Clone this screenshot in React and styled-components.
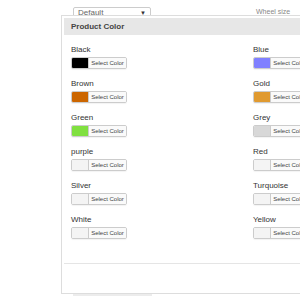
import styled, { createGlobalStyle } from 'styled-components';

const GlobalStyle = createGlobalStyle`
  html, body {
    margin: 0;
    padding: 0;
    background: #fff;
    font-family: "Liberation Sans", Arial, sans-serif;
  }
`;

const Page = styled.div`
  position: relative;
  width: 300px;
  height: 300px;
  overflow: hidden;
  background: #fff;
`;

const Backdrop = styled.div`
  display: flex;
  flex-direction: column;
  padding: 7px 0 0 73px;
`;

const TopRow = styled.div`
  display: flex;
  align-items: flex-start;
  gap: 105px;
`;

const FakeSelect = styled.div`
  width: 78px;
  height: 18px;
  box-sizing: border-box;
  border: 1px solid #ccc;
  border-radius: 2px;
  display: flex;
  justify-content: space-between;
  padding: 1px 4px 0 4px;
  font-size: 8px;
  line-height: 8px;
  color: #666;
`;

const Caret = styled.span`
  font-size: 6px;
  line-height: 9px;
  color: #333;
`;

const FieldLabel = styled.div`
  font-size: 7px;
  color: #888;
  padding-top: 1px;
`;

const BottomEdge = styled.div`
  margin-top: 269px;
  width: 79px;
  height: 4px;
  border-top: 2px solid #ececec;
`;

const Modal = styled.div`
  position: absolute;
  left: 61px;
  top: 15px;
  width: 260px;
  height: 279px;
  box-sizing: border-box;
  border: 1px solid #ddd;
  padding: 2px;
  background: #fff;
  display: flex;
  flex-direction: column;
`;

const Header = styled.div`
  height: 17px;
  background: #e7e7e7;
  padding-left: 7px;
  display: flex;
  align-items: center;
  font-size: 8px;
  font-weight: bold;
  color: #444;
`;

const Body = styled.div`
  height: 229px;
  box-sizing: border-box;
  padding: 10px 7px 0;
  display: grid;
  grid-template-columns: 182px 1fr;
  grid-auto-rows: 24px;
  row-gap: 10px;
`;

const Field = styled.div`
  display: flex;
  flex-direction: column;
`;

const Label = styled.div`
  font-size: 8px;
  line-height: 10px;
  color: #333;
  margin-bottom: 2px;
  white-space: nowrap;
`;

const ColorGroup = styled.div`
  display: flex;
  height: 12px;
  width: 56px;
  box-sizing: border-box;
  border: 1px solid #ccc;
  border-radius: 2px;
  box-shadow: 0 1px 1px rgba(0, 0, 0, 0.05);
  overflow: hidden;
`;

const Swatch = styled.div`
  width: 16px;
  flex: none;
  background: ${(p) => p.$color};
  border-right: 1px solid #ccc;
`;

const SelectButton = styled.div`
  flex: 1;
  background: #fafafa;
  font-size: 6px;
  line-height: 10px;
  color: #444;
  text-align: center;
  white-space: nowrap;
`;

const Footer = styled.div`
  height: 27px;
  border-top: 1px solid #e5e5e5;
`;

const colors = [
  ['Black', '#000000'],
  ['Blue', '#8080ff'],
  ['Brown', '#cc6600'],
  ['Gold', '#e09a30'],
  ['Green', '#80e040'],
  ['Grey', '#d8d8d8'],
  ['purple', '#f4f4f4'],
  ['Red', '#f4f4f4'],
  ['Silver', '#f4f4f4'],
  ['Turquoise', '#f4f4f4'],
  ['White', '#f4f4f4'],
  ['Yellow', '#f4f4f4'],
];

export default function App() {
  return (
    <Page>
      <GlobalStyle />
      <Backdrop>
        <TopRow>
          <FakeSelect>
            <span>Default</span>
            <Caret>▼</Caret>
          </FakeSelect>
          <FieldLabel>Wheel size</FieldLabel>
        </TopRow>
        <BottomEdge />
      </Backdrop>
      <Modal>
        <Header>Product Color</Header>
        <Body>
          {colors.map(([name, hex]) => (
            <Field key={name}>
              <Label>{name}</Label>
              <ColorGroup>
                <Swatch $color={hex} />
                <SelectButton>Select Color</SelectButton>
              </ColorGroup>
            </Field>
          ))}
        </Body>
        <Footer />
      </Modal>
    </Page>
  );
}
